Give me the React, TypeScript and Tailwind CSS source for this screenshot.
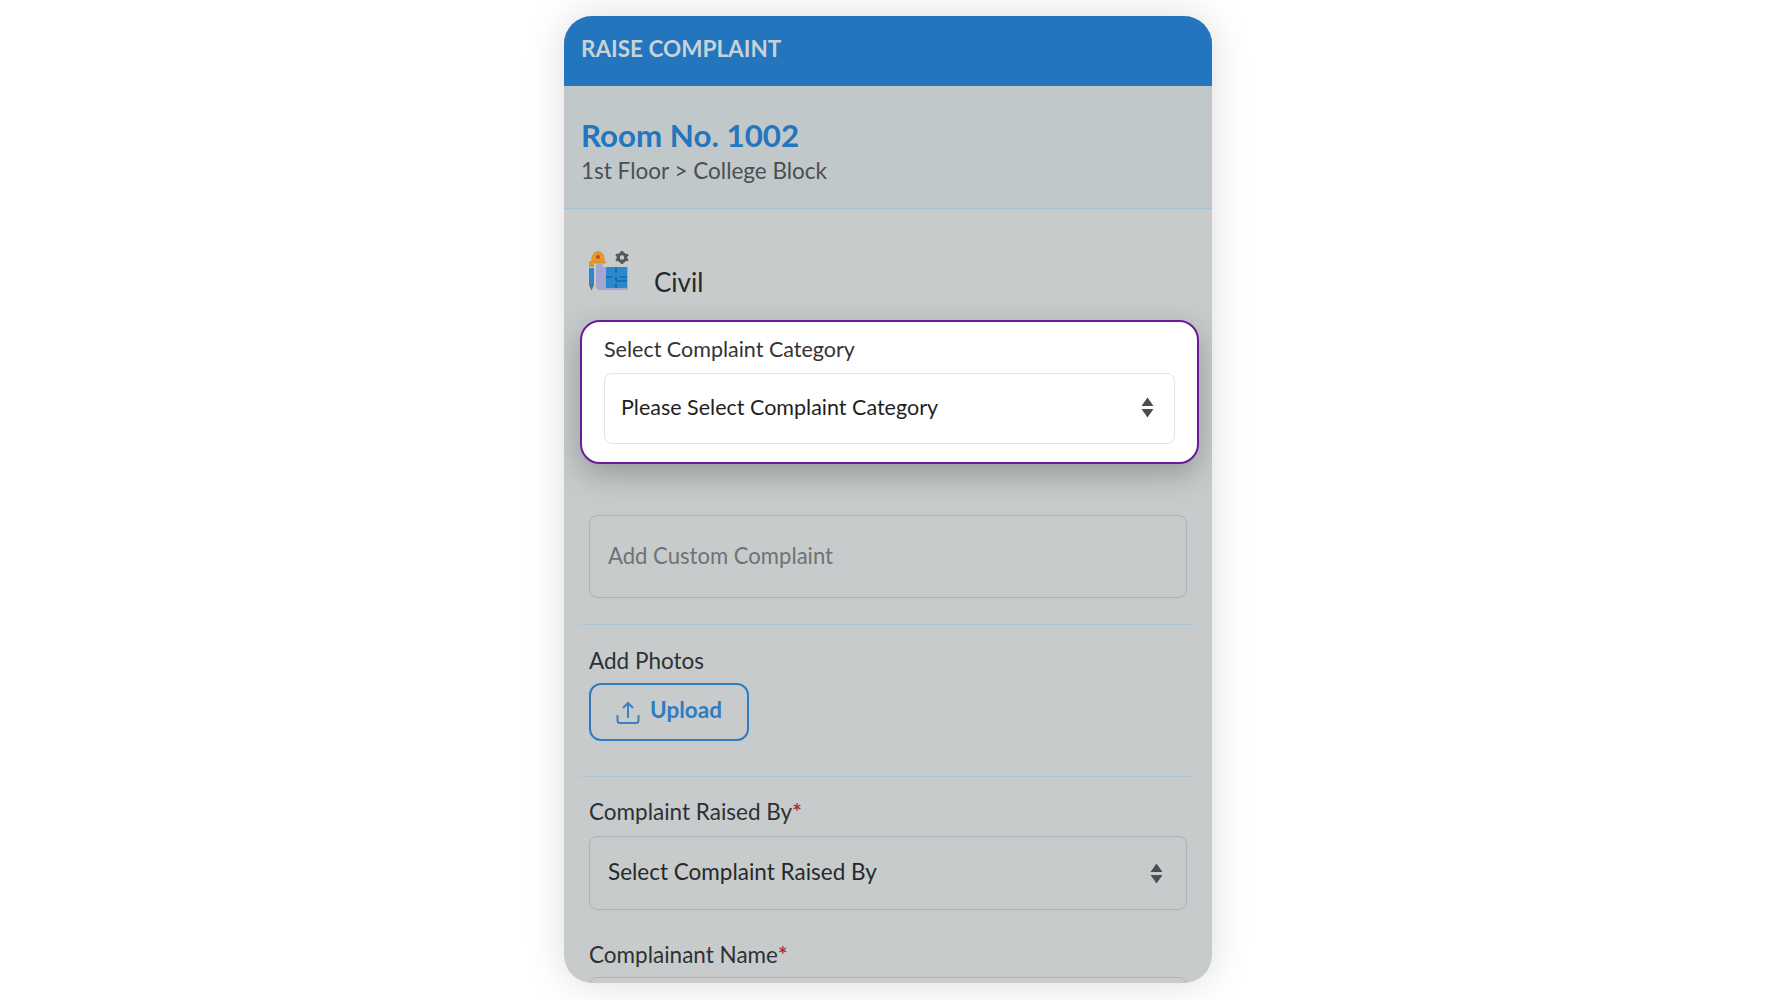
import React from 'react';

const SortArrows = () => (
    <svg width="13" height="21" viewBox="0 0 13 21" className="shrink-0">
        <path d="M6.5 0.5 12.5 9H0.5Z" fill="#4b4f52" />
        <path d="M0.5 12H12.5L6.5 20.5Z" fill="#4b4f52" />
    </svg>
);

const CivilIcon = () => (
    <svg width="41" height="41" viewBox="0 0 41 41" className="shrink-0">
        {/* helmet */}
        <path d="M2 12C2 6 4.500 1 9 1S16 6 16 12Z" fill="#e39a2d" />
        <rect x="0" y="11.500" width="17" height="2" fill="#d98f24" />
        <circle cx="9" cy="7" r="2" fill="#c8452f" />
        <rect x="0" y="13.500" width="5" height="3.500" fill="#d9962f" />
        {/* pencil */}
        <rect x="0" y="18" width="5" height="17" fill="#2a86cf" />
        <path d="M0 35H5L2.500 40.500Z" fill="#6d6a62" />
        {/* paper */}
        <path d="M7 16C7 14 9 13 10.500 13S14 14 14 16V17H39V40H11C8 40 7 38 7 36Z" fill="#a3a7cf" />
        {/* plan */}
        <rect x="17" y="17" width="21" height="21" fill="#2a88cf" />
        <path d="M27 17V23M27 27V31H38M17 27H23M31 27H38M27 34V38" stroke="#1d4f78" strokeWidth="1" fill="none" />
        {/* gear */}
        <circle cx="33" cy="7.500" r="3.800" fill="none" stroke="#55585a" strokeWidth="3.200" />
        <path d="M33 1V3M33 12V14M27 4.500 28.500 5.500M37.500 9.500 39 10.500M27 10.500 28.500 9.500M37.500 5.500 39 4.500" stroke="#55585a" strokeWidth="2.500" />
    </svg>
);

const UploadIcon = () => (
    <svg width="24" height="24" viewBox="0 0 24 24" fill="none" stroke="#3a80c2" strokeWidth="2" className="shrink-0">
        <path d="M12 18V3M7 8l5-5 5 5" />
        <path d="M1.500 15v5.500c0 1.500 1 2.500 2.500 2.500h16c1.500 0 2.500-1 2.500-2.500V15" />
    </svg>
);

export default function App() {
    return (
        <main className="h-[1000px] w-full bg-white overflow-hidden flex justify-center pt-4 font-['Lato',sans-serif]">
            <div className="w-[648px] h-[967px] shrink-0 rounded-[28px] overflow-hidden bg-[#c7cbcc] shadow-[0_0_40px_rgba(0,0,0,0.14)] text-[22.500px] leading-7 text-[#2e3133]">
                {/* Header */}
                <header className="h-[70px] bg-[#2375bd] px-[17px] pt-[18px]">
                    <h1 className="text-[22.500px] leading-[30px] font-bold text-[#c7d2d9]">RAISE COMPLAINT</h1>
                </header>

                {/* Room details */}
                <section className="h-[123px] bg-[#c1c8ca] border-b border-[#a9c3d6] px-[17px] pt-[31px]">
                    <h2 className="text-[31.300px] leading-9 font-bold text-[#2375bd]">Room No. 1002</h2>
                    <p className="mt-1 text-[#4b4f52]">1st Floor &gt; College Block</p>
                </section>

                {/* Trade */}
                <section className="h-[112px] border-b border-[#bfc8cd] pl-[25px] pt-[41px] flex gap-6">
                    <CivilIcon />
                    <span className="mt-4 text-[26px] leading-8 text-[#26292b]">Civil</span>
                </section>

                {/* Highlighted field */}
                <div className="relative -mt-[1px] ml-4 w-[619px] h-[144px] bg-white border-2 border-[#6a1b9a] rounded-[20px] px-[22px] pt-[13px] shadow-[0_10px_30px_rgba(0,0,0,0.25)] text-[#333] text-[21.500px]">
                    <label className="block">Select Complaint Category</label>
                    <div className="mt-[10px] h-[71px] border border-[#e3e3e3] rounded-lg pl-4 pr-[20px] pb-[3px] flex items-center justify-between text-[#1f1f1f]">
                        <span>Please Select Complaint Category</span>
                        <SortArrows />
                    </div>
                </div>

                <div className="mt-[51px] mx-[25px] h-[83px] border border-[#aeb2b4] rounded-lg pl-[18px] pb-[2px] flex items-center text-[#6f7375] text-[22.100px]">
                    Add Custom Complaint
                </div>

                <div className="mt-[26px] ml-4 w-[615px] border-t border-[#b0c6d5]"></div>

                <div className="mx-[25px]">
                    <label className="block mt-[22px]">Add Photos</label>
                    <button className="mt-2 w-[160px] h-[58px] border-2 border-[#2f7cc2] rounded-xl flex items-center justify-center gap-[10px] font-bold text-[#2f7cc2]">
                        <UploadIcon />
                        <span className="-translate-y-[2px]">Upload</span>
                    </button>
                </div>

                <div className="mt-[35px] ml-4 w-[615px] border-t border-[#b0c6d5]"></div>

                <div className="mx-[25px]">
                    <label className="block mt-[21px]">Complaint Raised By<span className="font-bold text-[#a8323f]">*</span></label>
                    <div className="mt-[10px] h-[74px] border border-[#aeb2b4] rounded-lg pl-[18px] pr-[23px] flex items-center justify-between text-[#26292b]">
                        <span className="-translate-y-[1px]">Select Complaint Raised By</span>
                        <SortArrows />
                    </div>
                    <label className="block mt-[31px]">Complainant Name<span className="font-bold text-[#a8323f]">*</span></label>
                    <div className="mt-2 h-[60px] border border-[#aeb2b4] rounded-lg"></div>
                </div>
            </div>
        </main>
    );
}
